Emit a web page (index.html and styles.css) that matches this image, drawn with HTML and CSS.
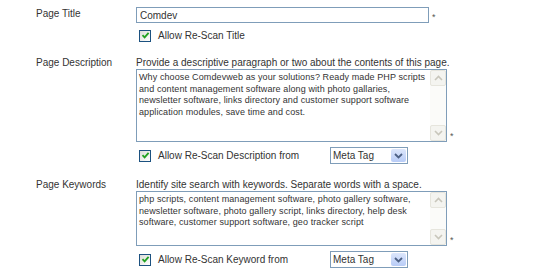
FILE: index.html
```html
<!DOCTYPE html>
<html>
<head lang="en">
    <meta charset="UTF-8">
    <title>Page Settings</title>
    <link rel="stylesheet" href="styles.css">
</head>
<body>
    <div class="form">
        <div class="row">
            <div class="label">Page Title</div>
            <div class="field">
                <div class="line">
                    <input class="text" type="text" value="Comdev"/><span class="req">*</span>
                </div>
                <label class="check">
                    <span class="box"><svg width="9" height="9" viewBox="0 0 9 9"><path d="M1.5 4.2 L3.6 6.4 L7.6 1.8" fill="none" stroke="#21a121" stroke-width="1.8"/></svg></span>
                    <span class="caption">Allow Re-Scan Title</span>
                </label>
            </div>
        </div>

        <div class="row">
            <div class="label">Page Description</div>
            <div class="field">
                <div class="hint">Provide a descriptive paragraph or two about the contents of this page.</div>
                <div class="line">
                    <div class="area area-desc">
                        <textarea wrap="off">Why choose Comdevweb as your solutions? Ready made PHP scripts
and content management software along with photo gallaries,
newsletter software, links directory and customer support software
application modules, save time and cost.</textarea>
                        <div class="scroll">
                            <span class="btn"><svg width="9" height="6" viewBox="0 0 9 6"><path d="M1 5 L4.5 1.5 L8 5" fill="none" stroke="#c8c6bb" stroke-width="1.6"/></svg></span>
                            <span class="btn"><svg width="9" height="6" viewBox="0 0 9 6"><path d="M1 1 L4.5 4.5 L8 1" fill="none" stroke="#c8c6bb" stroke-width="1.6"/></svg></span>
                        </div>
                    </div><span class="req">*</span>
                </div>
                <div class="check-row">
                    <label class="check">
                        <span class="box"><svg width="9" height="9" viewBox="0 0 9 9"><path d="M1.5 4.2 L3.6 6.4 L7.6 1.8" fill="none" stroke="#21a121" stroke-width="1.8"/></svg></span>
                        <span class="caption">Allow Re-Scan Description from</span>
                    </label>
                    <div class="select">
                        <select><option>Meta Tag</option></select>
                        <span class="drop"><svg width="9" height="6" viewBox="0 0 9 6"><path d="M1 1 L4.5 4.5 L8 1" fill="none" stroke="#4d6185" stroke-width="1.8"/></svg></span>
                    </div>
                </div>
            </div>
        </div>

        <div class="row">
            <div class="label">Page Keywords</div>
            <div class="field">
                <div class="hint">Identify site search with keywords. Separate words with a space.</div>
                <div class="line">
                    <div class="area area-keys">
                        <textarea wrap="off">php scripts, content management software, photo gallery software,
newsletter software, photo gallery script, links directory, help desk
software, customer support software, geo tracker script</textarea>
                        <div class="scroll">
                            <span class="btn"><svg width="9" height="6" viewBox="0 0 9 6"><path d="M1 5 L4.5 1.5 L8 5" fill="none" stroke="#c8c6bb" stroke-width="1.6"/></svg></span>
                            <span class="btn"><svg width="9" height="6" viewBox="0 0 9 6"><path d="M1 1 L4.5 4.5 L8 1" fill="none" stroke="#c8c6bb" stroke-width="1.6"/></svg></span>
                        </div>
                    </div><span class="req">*</span>
                </div>
                <div class="check-row">
                    <label class="check">
                        <span class="box"><svg width="9" height="9" viewBox="0 0 9 9"><path d="M1.5 4.2 L3.6 6.4 L7.6 1.8" fill="none" stroke="#21a121" stroke-width="1.8"/></svg></span>
                        <span class="caption">Allow Re-Scan Keyword from</span>
                    </label>
                    <div class="select">
                        <select><option>Meta Tag</option></select>
                        <span class="drop"><svg width="9" height="6" viewBox="0 0 9 6"><path d="M1 1 L4.5 4.5 L8 1" fill="none" stroke="#4d6185" stroke-width="1.8"/></svg></span>
                    </div>
                </div>
            </div>
        </div>
    </div>
</body>
</html>
```

FILE: styles.css
```css
*
{
    margin: 0;
    padding: 0;
    box-sizing: border-box;
}

body
{
    background: #ffffff;
    color: #333333;
    font-family: "Liberation Sans", Arial, sans-serif;
    font-size: 10px;
}

.form
{
    padding: 7px 0 0 36px;
}

.row
{
    display: grid;
    grid-template-columns: 100px auto;
    margin-top: 14px;
}
.row:first-child
{
    margin-top: 0;
}

.label
{
    line-height: 13px;
}

.line
{
    display: flex;
    align-items: flex-end;
}

.req
{
    font-size: 9px;
    line-height: 12px;
    margin-left: 3px;
    color: #555555;
}

.text
{
    width: 293px;
    height: 16px;
    border: 1px solid #7f9db9;
    padding: 0 3px;
    font: inherit;
    color: #333333;
    outline: none;
}

.hint
{
    line-height: 13px;
}

.area
{
    width: 311px;
    border: 1px solid #7f9db9;
    display: flex;
    background: #ffffff;
}
.area-desc
{
    height: 73px;
}
.area-keys
{
    height: 55px;
}
.area textarea
{
    flex: 1;
    border: none;
    resize: none;
    outline: none;
    overflow: hidden;
    padding: 2px 2px;
    font-family: inherit;
    font-size: 9px;
    letter-spacing: 0.1px;
    line-height: 11.5px;
    color: #333333;
    white-space: pre;
}

.scroll
{
    width: 16px;
    background: #fbfbf9;
    display: flex;
    flex-direction: column;
    justify-content: space-between;
}
.scroll .btn
{
    width: 16px;
    height: 16px;
    border: 1px solid #e6e5dd;
    border-radius: 2px;
    background: #f4f4f0;
    display: flex;
    align-items: center;
    justify-content: center;
}

.check
{
    display: flex;
    align-items: center;
    padding-left: 3px;
    height: 13px;
}
.field > .check
{
    margin-top: 6px;
}
.check .box
{
    width: 12px;
    height: 12px;
    border: 1px solid #1c5180;
    background: linear-gradient(135deg, #dcdcd7, #ffffff);
    display: flex;
    align-items: center;
    justify-content: center;
}
.check .caption
{
    margin-left: 7px;
}

.check-row
{
    display: grid;
    grid-template-columns: 194px auto;
    align-items: center;
    margin-top: 5px;
}

.select
{
    width: 78px;
    height: 17px;
    border: 1px solid #7f9db9;
    display: flex;
    background: #ffffff;
}
.select select
{
    flex: 1;
    appearance: none;
    -webkit-appearance: none;
    border: none;
    background: transparent;
    font: inherit;
    color: #333333;
    padding-left: 2px;
    outline: none;
}
.select .drop
{
    width: 15px;
    margin: 1px;
    border-radius: 2px;
    background: linear-gradient(#dce6fb, #b8ccf7);
    display: flex;
    align-items: center;
    justify-content: center;
}
```
